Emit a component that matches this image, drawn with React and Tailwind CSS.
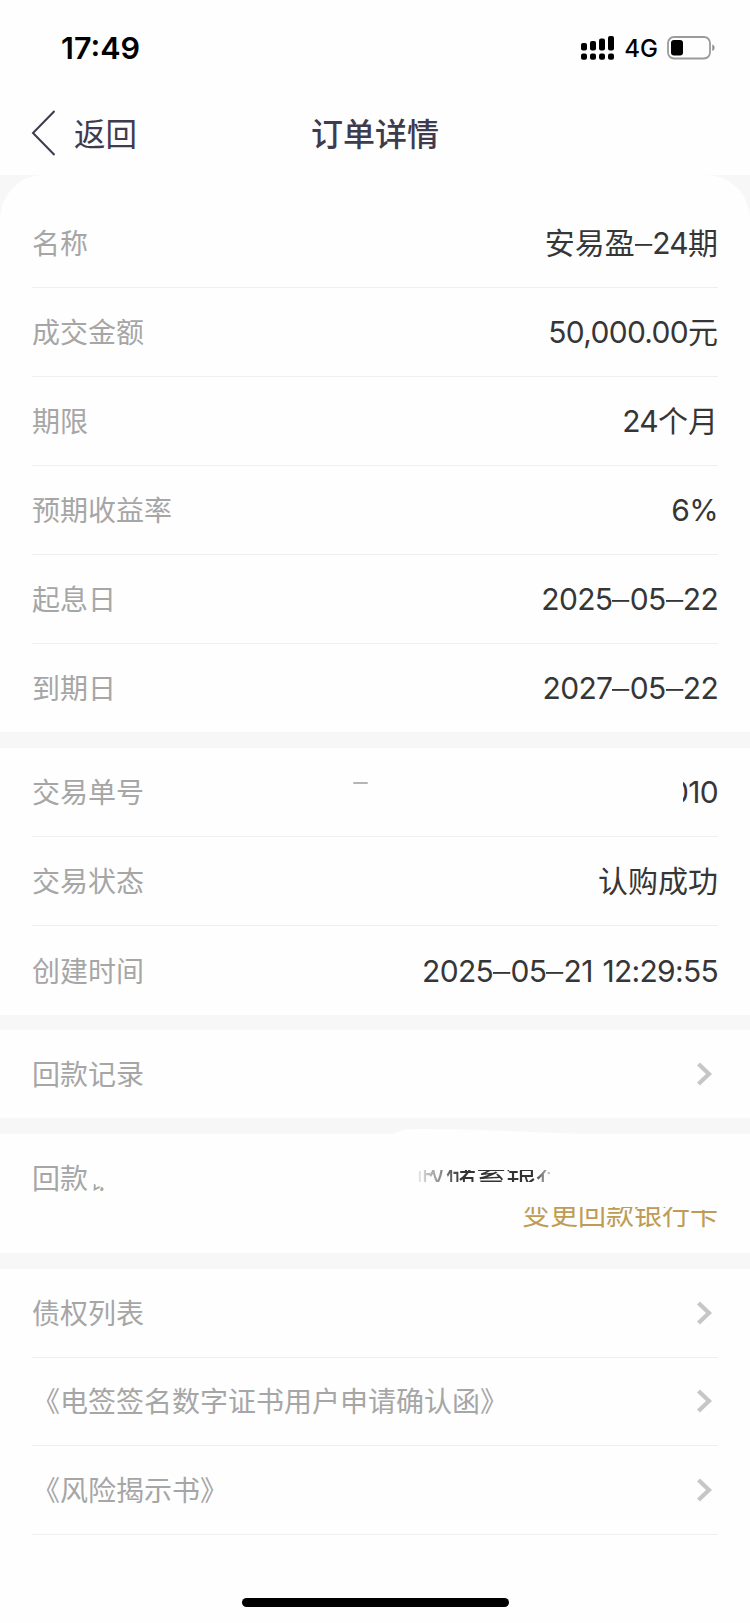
import React from 'react';

const summaryRows = [
  { label: '名称', value: '安易盈–24期' },
  { label: '成交金额', value: '50,000.00元' },
  { label: '期限', value: '24个月' },
  { label: '预期收益率', value: '6%' },
  { label: '起息日', value: '2025–05–22' },
  { label: '到期日', value: '2027–05–22' },
];

const documents = ['债权列表', '《电签签名数字证书用户申请确认函》', '《风险揭示书》'];

const Chevron = () => (
  <svg className="w-[17px] h-6 mr-[5px]" viewBox="0 0 17 24" fill="none" stroke="#c6c6c6" strokeWidth={4.2}>
    <path d="M2.5 2L13 12L2.5 22" />
  </svg>
);

// Latin runs are tracked tighter than the Chinese characters, dashes are wider
const Value = ({ text }) => (
  <span className="text-[30px] leading-[40px] text-[#363636] whitespace-pre">
    {text.split(/([\x20-\x7e]+|–)/).map((part, i) => {
      if (part === '–') return <span key={i} className="inline-block mx-[1.2px] scale-x-[1.15] font-light">–</span>;
      return (
        <span key={i} className={i % 2 ? 'tracking-[-0.7px] [word-spacing:2px]' : ''}>{part}</span>
      );
    })}
  </span>
);

const Row = ({ label, children, last, size = 'h-[89px]' }) => (
  <div className={`mx-8 ${size} flex items-center justify-between ${last ? '' : 'border-b border-[#efefef]'}`}>
    <span className="mt-[2px] text-[28px] leading-[40px] text-[#a6a6a6] whitespace-nowrap">{label}</span>
    {children}
  </div>
);

const StatusBar = () => (
  <div className="h-[96px] flex items-center justify-between pl-[61px] pr-[34px]">
    <span className="text-[30.5px] leading-none font-semibold text-black">17:49</span>
    <div className="flex items-center">
      <svg className="w-[34px] h-6" viewBox="0 0 34 24" fill="#000">
        <rect x="0" y="7" width="6" height="7.5" rx="2" />
        <rect x="9" y="5" width="6" height="9.5" rx="2" />
        <rect x="18" y="2.5" width="6" height="12" rx="2" />
        <rect x="27" y="0" width="6" height="14.5" rx="2" />
        <rect x="0" y="17.5" width="6" height="6.2" rx="2" />
        <rect x="9" y="17.5" width="6" height="6.2" rx="2" />
        <rect x="18" y="17.5" width="6" height="6.2" rx="2" />
        <rect x="27" y="17.5" width="6" height="6.2" rx="2" />
      </svg>
      <span className="ml-[9px] mt-[2px] text-[24px] leading-none font-medium text-black">4G</span>
      <svg className="w-[49px] h-6 ml-[9px]" viewBox="0 0 49 24">
        <rect x="1" y="1" width="42" height="21.5" rx="6" fill="none" stroke="#9b9b9b" strokeWidth="1.8" />
        <rect x="4" y="4" width="12" height="15.5" rx="3" fill="#000" />
        <path d="M45.3 8.5c3 1 3 5.5 0 6.5z" fill="#8c8c8c" />
      </svg>
    </div>
  </div>
);

const App = () => (
  <div className="w-[750px] h-[1623px] overflow-hidden flex flex-col bg-[#f7f7f7] font-['Inter','Noto_Sans_CJK_SC',sans-serif]">
    <header className="h-[175px] shrink-0 bg-[#fefefe]">
      <StatusBar />
      <div className="h-[75px] grid grid-cols-3 items-center text-[#3f3b4e]">
        <div className="flex items-center pl-[31px]">
          <svg className="w-6 h-[46px] -mt-[2px]" viewBox="0 0 24 46" fill="none" stroke="currentColor" strokeWidth={2}>
            <path d="M23.5 1L2 23L23.5 45" />
          </svg>
          <span className="ml-[19px] mt-[2px] text-[31.5px] leading-[40px]">返回</span>
        </div>
        <h1 className="mt-[2px] text-center text-[32px] leading-[40px] font-medium">订单详情</h1>
      </div>
    </header>

    <section className="shrink-0 bg-[#fefefe] rounded-t-[44px] pt-6">
      {summaryRows.map((row, i) => {
        const last = i === summaryRows.length - 1;
        return (
          <Row key={row.label} label={row.label} last={last} size={last ? 'h-[88px]' : 'h-[89px]'}>
            <Value text={row.value} />
          </Row>
        );
      })}
    </section>

    <section className="relative shrink-0 mt-4 bg-[#fefefe]">
      <Row label="交易单号">
        <span className="[clip-path:inset(0_0_0_13px)]">
          <Value text="010" />
        </span>
      </Row>
      <span className="absolute left-[353px] top-[34px] w-[15px] h-[2px] rounded-full bg-[#b5b5b5]" />
      <Row label="交易状态">
        <Value text="认购成功" />
      </Row>
      <Row label="创建时间" last>
        <Value text="2025–05–21 12:29:55" />
      </Row>
    </section>

    <section className="shrink-0 mt-[15px] bg-[#fefefe]">
      <Row label="回款记录" size="h-[88px]" last>
        <Chevron />
      </Row>
    </section>

    {/* Bank card block, account details are masked out */}
    <section className="relative shrink-0 mt-4 h-[119px] bg-[#fefefe]">
      <svg className="absolute left-[390px] -top-[5px] w-[220px] h-[6px]" viewBox="0 0 220 6" fill="#fefefe">
        <path d="M0 6C8 3 12 0 24 0C90 0 140 3 220 6z" />
      </svg>
      <div className="mx-8 flex items-start justify-between">
        <div className="flex pt-[25px] text-[28px] leading-[40px] text-[#a6a6a6]">
          <span>回款</span>
          <span className="h-[40px] [clip-path:polygon(20%_62%,55%_72%,55%_84%,20%_84%)]">银</span>
        </div>
        <div className="flex flex-col items-end pt-[22px]">
          <span className="h-[40px] mr-[152px] text-[30px] leading-[40px] text-[#333333] whitespace-nowrap [clip-path:inset(14px_16px_14px_0)] [mask-image:linear-gradient(to_right,transparent_15%,black_42%,black_82%,transparent_94%)]">
            邮政储蓄银行
          </span>
          <span className="mt-[3px] text-[28px] leading-[32px] text-[#bf9c55] [clip-path:polygon(0_8px,84%_8px,88%_11px,100%_11px,100%_100%,0_100%)]">
            变更回款银行卡
          </span>
        </div>
      </div>
    </section>

    <section className="grow mt-4 bg-[#fefefe] flex flex-col">
      {documents.map((name) => (
        <Row key={name} label={name} size="h-[88.5px]">
          <Chevron />
        </Row>
      ))}
      <div className="mt-auto mb-4 mx-auto w-[267px] h-[9px] rounded-full bg-black" />
    </section>
  </div>
);

export default App;
